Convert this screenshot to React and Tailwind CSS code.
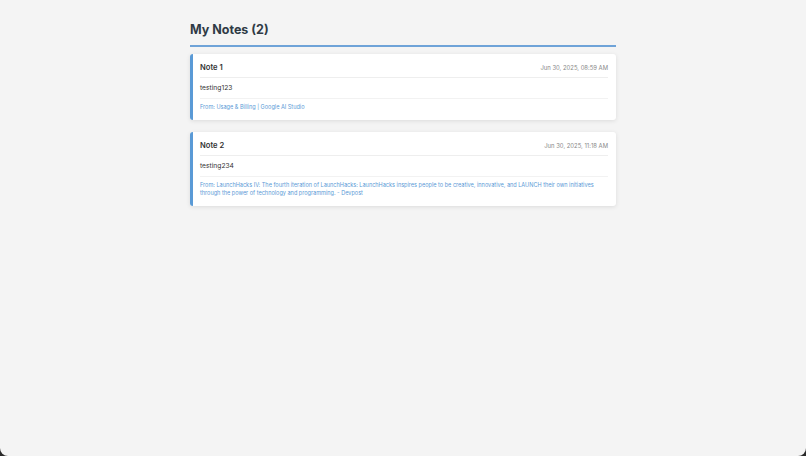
import React from "react";

const notes = [
  {
    title: "Note 1",
    date: "Jun 30, 2025, 08:59 AM",
    body: "testing123",
    from: "From: Usage & Billing | Google AI Studio",
  },
  {
    title: "Note 2",
    date: "Jun 30, 2025, 11:18 AM",
    body: "testing234",
    from:
      "From: LaunchHacks IV: The fourth iteration of LaunchHacks: LaunchHacks inspires people to be creative, innovative, and LAUNCH their own initiatives through the power of technology and programming. - Devpost",
  },
];

function NoteCard({ note }) {
  return (
    <div className="bg-white border-l-[3px] border-[#5a9ad6] rounded-[3px] shadow-[0_1px_4px_rgba(0,0,0,0.10)] pl-[7px] pr-[8px] pt-[8px] pb-[8px]">
      <div className="flex items-center justify-between border-b border-[#eeeeee] pb-[4px]">
        <div className="text-[7.6px] leading-[11px] font-semibold text-[#333333]">{note.title}</div>
        <div className="text-[5.9px] leading-[11px] text-[#888888]">{note.date}</div>
      </div>
      <div className="border-b border-[#f2f2f2] pt-[6px] pb-[5px] text-[6.7px] leading-[9px] text-[#333333]">
        {note.body}
      </div>
      <div className="pt-[4px] text-[5.55px] leading-[8.5px] text-[#5a9ad6]">{note.from}</div>
    </div>
  );
}

export default function App() {
  return (
    <div className="w-[806px] h-[456px] bg-[#2a2a2a]" style={{ fontFamily: "Inter, 'Noto Sans', sans-serif" }}>
      <div className="w-full h-full bg-[#f4f4f4] rounded-b-[8px] overflow-hidden">
        <div className="w-[426px] mx-auto pt-[22px]">
          <h1 className="text-[12.5px] leading-[16px] font-bold text-[#2f3a45] pb-[7px] border-b-[2px] border-[#6fa3d8]">
            My Notes (2)
          </h1>
          <div className="flex flex-col gap-[12px] mt-[7px]">
            {notes.map((n) => (
              <NoteCard key={n.title} note={n} />
            ))}
          </div>
        </div>
      </div>
    </div>
  );
}
